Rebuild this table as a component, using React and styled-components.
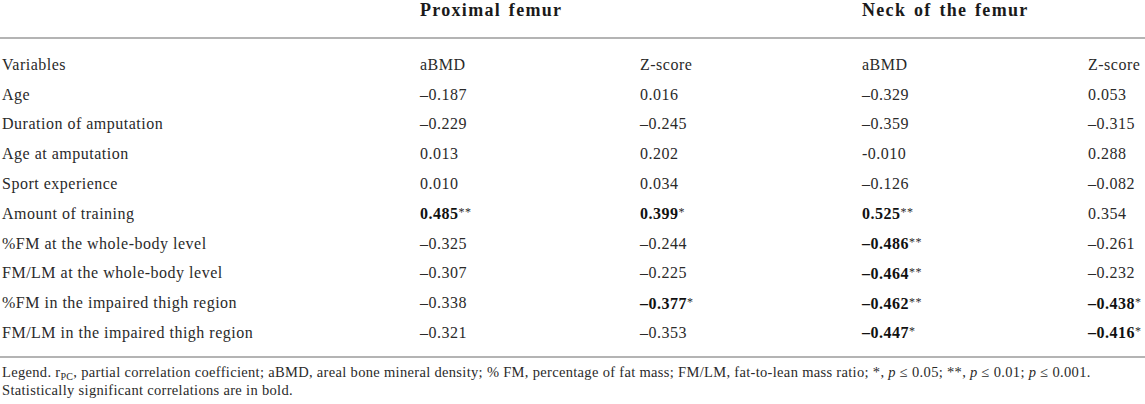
import styled, { createGlobalStyle } from "styled-components";

const GlobalStyle = createGlobalStyle`
  html, body {
    margin: 0;
    padding: 0;
    background: #fff;
  }
  body {
    font-family: "Liberation Serif", "Times New Roman", serif;
    color: #2a2a2a;
  }
`;

const columns = "420px 220px 222px 226px 1fr";

const rows = [
  ["Age", "–0.187", "0.016", "–0.329", "0.053"],
  ["Duration of amputation", "–0.229", "–0.245", "–0.359", "–0.315"],
  ["Age at amputation", "0.013", "0.202", "-0.010", "0.288"],
  ["Sport experience", "0.010", "0.034", "–0.126", "–0.082"],
  ["Amount of training", ["0.485", "**"], ["0.399", "*"], ["0.525", "**"], "0.354"],
  ["%FM at the whole-body level", "–0.325", "–0.244", ["–0.486", "**"], "–0.261"],
  ["FM/LM at the whole-body level", "–0.307", "–0.225", ["–0.464", "**"], "–0.232"],
  ["%FM in the impaired thigh region", "–0.338", ["–0.377", "*"], ["–0.462", "**"], ["–0.438", "*"]],
  ["FM/LM in the impaired thigh region", "–0.321", "–0.353", ["–0.447", "*"], ["–0.416", "*"]],
];

export default function App() {
  return (
    <>
      <GlobalStyle />
      <Table>
        <HeadRow>
          <span />
          <GroupTitle>Proximal femur</GroupTitle>
          <GroupTitle>Neck of the femur</GroupTitle>
        </HeadRow>
        <Rule />
        <Body>
          <Row>
            <Cell>Variables</Cell>
            <Cell>aBMD</Cell>
            <Cell>Z-score</Cell>
            <Cell>aBMD</Cell>
            <Cell>Z-score</Cell>
          </Row>
          {rows.map((r) => (
            <Row key={r[0]}>
              {r.map((v, i) =>
                Array.isArray(v) ? (
                  <Cell key={i}>
                    <b>{v[0]}</b>
                    <Star>{v[1]}</Star>
                  </Cell>
                ) : (
                  <Cell key={i}>{v}</Cell>
                )
              )}
            </Row>
          ))}
        </Body>
        <Rule $bottom />
        <Legend>
          Legend. r<Sub>PC</Sub>, partial correlation coefficient; aBMD, areal bone
          mineral density; % FM, percentage of fat mass; FM/LM, fat-to-lean mass
          ratio; *, <i>p</i> ≤ 0.05; **, <i>p</i> ≤ 0.01; <i>p</i> ≤ 0.001.
          <br />
          Statistically significant correlations are in bold.
        </Legend>
      </Table>
    </>
  );
}

const Table = styled.div`
  width: 1145px;
`;

const HeadRow = styled.div`
  display: grid;
  grid-template-columns: 420px 442px 1fr;
  padding-bottom: 17px;
`;

const GroupTitle = styled.div`
  font-size: 18px;
  font-weight: 700;
  line-height: 20px;
  letter-spacing: 1.3px;
  word-spacing: 2px;
  color: #1a1a1a;
`;

const Rule = styled.div`
  height: 2px;
  background: #b4b4b4;
  margin-bottom: ${(p) => (p.$bottom ? "5px" : "11px")};
  margin-top: ${(p) => (p.$bottom ? "9px" : "0")};
`;

const Body = styled.div`
  display: flex;
  flex-direction: column;
`;

const Row = styled.div`
  display: grid;
  grid-template-columns: ${columns};
  height: 29.7px;
  align-items: center;
`;

const Cell = styled.div`
  font-size: 16px;
  line-height: 29.7px;
  letter-spacing: 0.5px;
  white-space: nowrap;
  &:first-child {
    padding-left: 2px;
  }
  b {
    color: #111;
  }
`;

const Star = styled.span`
  font-size: 12px;
  vertical-align: 3px;
`;

const Legend = styled.div`
  font-size: 14.5px;
  line-height: 18.5px;
  letter-spacing: 0.32px;
  padding-left: 2px;
  white-space: nowrap;
`;

const Sub = styled.sub`
  font-size: 10px;
  vertical-align: -3px;
  line-height: 0;
`;
